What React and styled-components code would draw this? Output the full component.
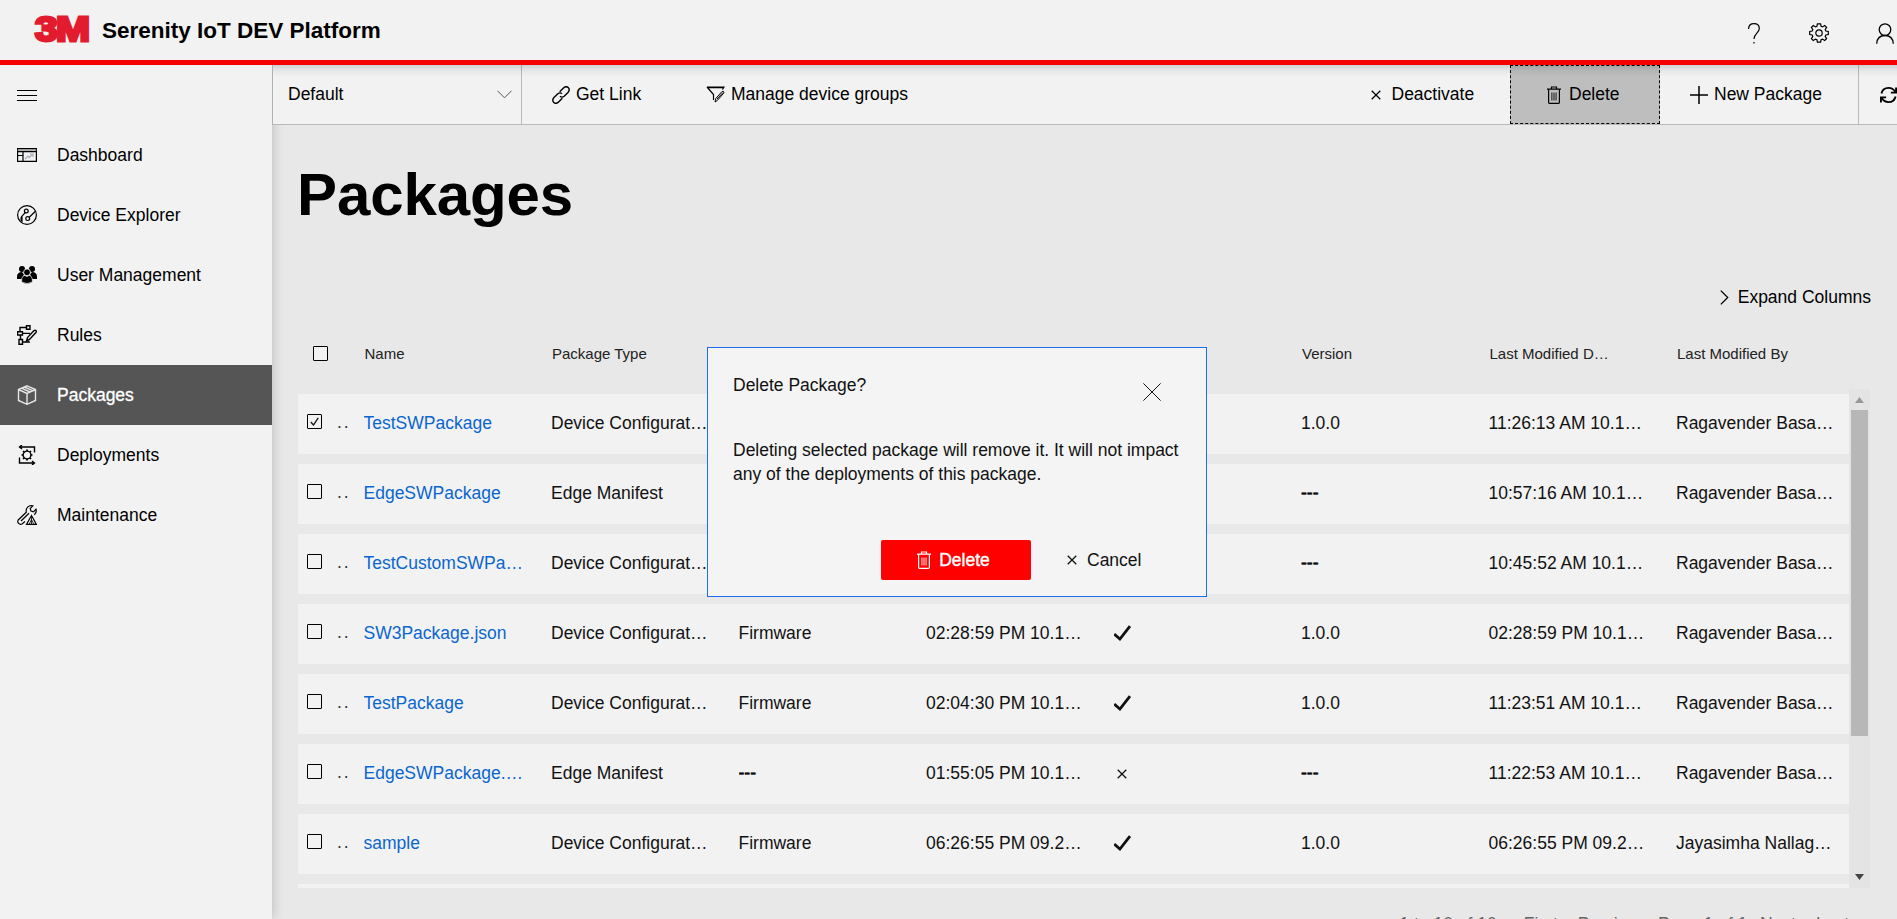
import React from "react";
import styled, { createGlobalStyle, css } from "styled-components";

const Global = createGlobalStyle`
  * { box-sizing: border-box; }
  html, body { margin: 0; padding: 0; overflow: hidden; }
  body { font-family: "Liberation Sans", Arial, sans-serif; font-size: 17.5px; color: #000; background: #e8e8e8; }
`;

const Shell = styled.div`
  width: 1897px;
  height: 919px;
  display: flex;
  flex-direction: column;
  overflow: hidden;
`;

const Header = styled.header`
  flex: none;
  height: 65px;
  display: flex;
  align-items: flex-start;
  background: #f2f2f2;
  border-bottom: 5px solid #f50000;
  padding-left: 35px;
  position: relative;
  z-index: 2;
`;

const Brand = styled.h1`
  margin: 17.5px 0 0 12px;
  font-size: 22.5px;
  line-height: 26px;
  font-weight: 700;
  flex: 1;
`;

const Logo = styled.div`
  margin-top: 14px;
  height: 30px;
  width: 55px;
  font-size: 35.5px;
  line-height: 30px;
  font-weight: 700;
  letter-spacing: -1.5px;
  white-space: nowrap;
  color: #e31b2e;
  -webkit-text-stroke: 3px #e31b2e;
  transform: scaleX(1.15);
  transform-origin: left center;
`;

const HeaderIcons = styled.div`
  display: flex;
  gap: 47px;
  margin: 23px 3px 0 0;
  svg:first-child { margin-right: 2px; }
`;

const Body = styled.div`
  flex: 1;
  display: flex;
  min-height: 0;
`;

const Sidebar = styled.nav`
  flex: none;
  width: 272px;
  background: #f2f2f2;
  box-shadow: 0 0 12px rgba(0, 0, 0, 0.22);
  z-index: 1;
  position: relative;
`;

const NavItem = styled.div`
  height: 60px;
  display: flex;
  align-items: center;
  gap: 20px;
  padding-left: 17px;
  color: ${(p) => (p.$active ? "#fff" : "#000")};
  background: ${(p) => (p.$active ? "#555" : "transparent")};
  ${(p) => p.$active && css`-webkit-text-stroke: 0.3px #fff;`}
`;

const Main = styled.main`
  flex: 1;
  min-width: 0;
  display: flex;
  flex-direction: column;
`;

const Toolbar = styled.div`
  flex: none;
  height: 60px;
  display: flex;
  background: #f2f2f2;
  border-bottom: 1px solid #b9b9b9;
  border-left: 1px solid #b0b0b0;
  position: relative;
  z-index: 1;
  &::after {
    content: "";
    position: absolute;
    inset: 0 0 auto 0;
    height: 12px;
    background: linear-gradient(rgba(0, 0, 0, 0.14), rgba(0, 0, 0, 0.05) 45%, transparent);
  }
`;

const GroupSelect = styled.div`
  width: 249px;
  border-right: 1px solid #b9b9b9;
  display: flex;
  justify-content: space-between;
  padding: 0 9px 0 15px;
  align-items: center;
`;

const Tool = styled.div`
  display: flex;
  align-items: center;
  white-space: nowrap;
  padding: 0 0 0 ${(p) => p.$pad}px;
  gap: ${(p) => p.$gap}px;
  width: ${(p) => p.$w}px;
  ${(p) => p.$focused && css`
    background: #bebebe;
    border: 1px dashed #000;
  `}
  ${(p) => p.$divider && css`
    border-left: 1px solid #b9b9b9;
  `}
`;

const Spacer = styled.div`
  flex: 1;
`;

const Content = styled.div`
  flex: 1;
  min-height: 0;
  padding: 35px 27px 0 26px;
  display: flex;
  flex-direction: column;
`;

const Title = styled.h2`
  flex: none;
  margin: 0 0 0 -1px;
  font-size: 60px;
  line-height: 70px;
  font-weight: 700;
  letter-spacing: -0.1px;
`;

const Expand = styled.div`
  flex: none;
  margin: 57px -1px 0 0;
  height: 20px;
  display: flex;
  justify-content: flex-end;
  align-items: center;
  gap: 9px;
  white-space: nowrap;
`;

const gridColumns = css`
  display: grid;
  grid-template-columns: 65.5px repeat(7, 187.5px) 173px;
  white-space: nowrap;
`;

const HeadRow = styled.div`
  flex: none;
  ${gridColumns}
  height: 82px;
  align-items: center;
  padding-top: 12px;
  font-size: 15px;
  color: #222;
`;

const GridBox = styled.div`
  flex: none;
  height: 499px;
  display: flex;
`;

const Rows = styled.div`
  width: 1551px;
  padding-top: 5px;
  overflow: hidden;
  display: flex;
  flex-direction: column;
  gap: 10px;
`;

const Row = styled.div`
  flex: none;
  ${gridColumns}
  height: 60px;
  align-items: center;
  background: #f2f2f2;
  color: #111;
`;

const Lead = styled.div`
  display: flex;
  align-items: center;
  padding-left: ${(p) => (p.$head ? 15 : 9)}px;
  gap: 15px;
`;

const Check = styled.span`
  flex: none;
  width: 15px;
  height: 15px;
  border: 1px solid #000;
  border-radius: 1px;
  background: #f2f2f2;
  display: flex;
  align-items: center;
  justify-content: center;
  margin-bottom: ${(p) => (p.$head ? 1 : 5)}px;
`;

const Dots = styled.span`
  letter-spacing: 2px;
  margin-bottom: 3px;
  color: #333;
`;

const Cell = styled.div`
  padding-left: ${(p) => p.$icon || 0}px;
  padding-bottom: 2px;
  overflow: hidden;
  color: ${(p) => (p.$link ? "#0a66d0" : "inherit")};
  ${(p) => p.$strong && css`-webkit-text-stroke: 0.6px #000;`}
`;

const ScrollTrack = styled.div`
  width: 21px;
  background: #e4e4e4;
  display: flex;
  flex-direction: column;
  align-items: center;
`;

const Thumb = styled.div`
  width: 17px;
  height: 326px;
  background: #b7b7b7;
`;

const Arrow = styled.div`
  height: ${(p) => p.$h || 21}px;
  width: 9px;
  display: flex;
  align-items: center;
  justify-content: center;
`;

const Pager = styled.div`
  flex: none;
  margin-top: 26px;
  display: flex;
  justify-content: flex-end;
  padding-right: 21px;
  color: #666;
  white-space: nowrap;
`;

const PageBit = styled.span`
  margin-left: ${(p) => p.$m}px;
`;

const Modal = styled.div`
  position: absolute;
  left: 707px;
  top: 347px;
  width: 500px;
  height: 250px;
  z-index: 5;
  background: #f4f4f4;
  border: 1px solid #1b6fee;
  padding: 25px 25px 16px;
  display: flex;
  flex-direction: column;
  color: #111;
`;

const ModalHead = styled.div`
  display: flex;
  justify-content: space-between;
  line-height: 24px;
  padding-right: 20px;
  height: 65px;
  svg { margin-top: 10px; }
`;

const ModalText = styled.p`
  margin: 0;
  line-height: 24px;
  white-space: nowrap;
  flex: 1;
`;

const ModalActions = styled.div`
  display: flex;
  align-items: center;
  padding-left: 148px;
`;

const DangerButton = styled.div`
  width: 150px;
  height: 40px;
  border-radius: 2px;
  background: #f00;
  color: #fff;
  display: flex;
  align-items: center;
  justify-content: center;
  gap: 8px;
  padding-right: 5px;
  -webkit-text-stroke: 0.4px #fff;
`;

const CancelButton = styled.div`
  display: flex;
  align-items: center;
  gap: 10px;
  padding-left: 36px;
`;

const Svg = ({ w = 20, h = w, vb, sw = 1.2, children, ...r }) => (
  <svg width={w} height={h} viewBox={vb || `0 0 ${w} ${h}`} fill="none" stroke="currentColor" strokeWidth={sw} {...r}>
    {children}
  </svg>
);

const Burger = () => <Svg sw={1}><path d="M0 5.500H20M0 10.500H20M0 15.500H20" stroke="#000" /></Svg>;
const DashIcon = () => (
  <Svg sw={1.200}><path d="M.6 3.600H19.400V16.400H.6ZM.6 6.600H19.400M6 6.600V16.400M.6 10.500H6" /><path d="M.6 5H19.400" stroke="#888" /><path d="M8 14l3-3 1.500 1.500 3-3.500M13 9h3v3" stroke="#a9b0b8" /></Svg>
);
const DeviceIcon = () => (
  <Svg><circle cx="10" cy="10" r="9.400" /><circle cx="9.300" cy="6" r="1.900" /><circle cx="10.700" cy="13.600" r="1.900" /><path d="M8.300 7.500L5 11.200V17M12.200 12.300L18.500 6.200M5 11.200C4 12 3.800 13.500 4.300 16" /></Svg>
);
const UsersIcon = () => (
  <Svg stroke="none" fill="currentColor"><circle cx="5" cy="4" r="3" /><circle cx="15" cy="4" r="3" /><path d="M0 14V11.500C0 8.500 2 7 5 7L7 9.500L4.500 14ZM20 14V11.500C20 8.500 18 7 15 7L13 9.500L15.500 14Z" /><circle cx="10" cy="7.300" r="3.400" fill="currentColor" stroke="#f2f2f2" strokeWidth=".8" /><path d="M4.700 17V15C4.700 12 6.500 10.400 8 10.400Q10 12.500 12 10.400C13.500 10.400 15.300 12 15.300 15V17Q10 20 4.700 17Z" stroke="#f2f2f2" strokeWidth=".6" /></Svg>
);
const RulesIcon = () => (
  <Svg sw={1.400}><path d="M9.500 .8H13V4.300H9.500ZM.6 6.800H5.500V10H.6ZM2 14.500H5.500V19.300H2ZM3 6.800V2.500H9.500M5.500 8.400H13M3.500 10V14.500M5.500 17H12L11.500 16" /><path d="M9.500 16L10.500 12.500L17 5.600C18.600 4.500 20 6 18.900 7.500L12.500 14.500Z" /></Svg>
);
const PackageIcon = () => (
  <Svg sw={1.400} stroke="#e6e6e6"><path d="M10 .8L18.500 4.500V15.500L10 19.300L1.500 15.500V4.500ZM1.500 4.500L10 8.400L18.500 4.500M10 8.400V19.300M4.500 3.200L13 7M7.300 2L15.700 5.700" /></Svg>
);
const DeployIcon = () => (
  <Svg sw={1.400}>
    <circle cx="10" cy="10" r="3.900" />
    <path d="M10 4.500V6M10 14V15.500M4.500 10H6M14 10H15.500M6 6L7.200 7.200M12.800 12.800L14 14M14 6L12.800 7.200M7.200 12.800L6 14" strokeWidth="1.700" />
    <path d="M2.500 2H17.500V7.500M5 0L2.500 2L5 4M2.500 12.500V18H17.500M15 16L17.500 18L15 20" />
  </Svg>
);
const MaintIcon = () => (
  <Svg><path d="M8 16.500L5 19C2.500 20.300 -.3 17.500 1.200 15L9.300 7.200C8.500 3 11.500 0 15.800 .9L13.200 3.600L14 6L16.500 6.800L19 4.200C19.700 6.500 18.800 8.500 17.300 9.800" /><path d="M4 16L12 8.300" /><path d="M14.500 10.500L9.500 19.400H19.400Z" /><path d="M14.500 12V19M12.300 19L14.500 14.500L16.700 19" strokeWidth=".8" /></Svg>
);
const ChevronDown = () => <Svg w={15} h={9} sw={1} stroke="#555"><path d="M.5 .8L7.500 7.800L14.500 .8" /></Svg>;
const LinkIcon = () => (
  <Svg w={18} sw={1.400}><path d="M7.700 5.700L11.200 2.200C13 .4 15 .5 16.200 1.600C17.500 3 17.400 4.900 16 6.400L12.200 10.200C10.500 11.600 8.800 11 8 10.300M10.300 12.300L6.800 15.800C5 17.600 3 17.500 1.800 16.400C.5 15 .6 13.100 2 11.600L5.800 7.800C7.500 6.400 9.200 7 10 7.700" /></Svg>
);
const FunnelIcon = () => (
  <Svg w={19} h={17}><path d="M1 1H18L16.500 3.500M1 1L7.500 8.500V14M1.500 1.600H17" /><path d="M9 16L9.800 12.500L16 5.500C17.500 4.800 18.500 6 17.700 7.200L11.500 14.300ZM11 13L17 6.500" strokeWidth="1" /></Svg>
);
const SmallX = ({ size = 10 }) => <Svg w={size} sw={1.300} vb="0 0 10 10"><path d="M.7 .7L9.300 9.300M9.300 .7L.7 9.300" /></Svg>;
const Trash = () => (
  <Svg w={14} h={18}><path d="M0 3.200H14M4.500 3V1H9.500V3M1.600 3.200V16.500Q1.600 17.300 2.400 17.300H11.600Q12.400 17.300 12.400 16.500V3.200" /><path d="M4.900 6.500V14.500M7 6.500V14.500M9.100 6.500V14.500" strokeWidth=".9" /></Svg>
);
const Plus = () => <Svg w={18} sw={1.500}><path d="M9 0V18M0 9H18" /></Svg>;
const Refresh = () => (
  <Svg w={18} sw={2}><path d="M1.500 7.500C2.500 3.500 5.500 1.500 9 1.500C12 1.500 14.500 3 16 5.500M16.500 10.500C15.500 14.500 12.500 16.500 9 16.500C6 16.500 3.500 15 2 12.500" /><path d="M17 1V6.500H11.500M1 17V11.500H6.500" /></Svg>
);
const ChevronRight = () => <Svg w={9} h={15} sw={1.300}><path d="M.8 .6L7.700 7.500L.8 14.400" /></Svg>;
const Help = () => <Svg w={12} h={21}><path d="M.6 6C.6 2.500 3 .7 6 .7C9 .7 11.300 2.500 11.300 5.600C11.300 10 6 10.500 6 16M6 19V20.600" /></Svg>;
const Gear = () => (
  <Svg w={20} vb="0 0 20 20" sw={1.200}><circle cx="10" cy="10" r="3.200" /><path d="M8.400 .8H11.600L12.100 3.300L13.500 3.900L15.700 2.500L17.600 4.400L16.200 6.600L16.800 8L19.300 8.500V11.500L16.800 12L16.200 13.400L17.600 15.600L15.700 17.500L13.500 16.100L12.100 16.700L11.600 19.200H8.400L7.900 16.700L6.500 16.100L4.300 17.500L2.400 15.600L3.800 13.400L3.200 12L.7 11.500V8.500L3.200 8L3.800 6.600L2.400 4.400L4.300 2.500L6.500 3.900L7.900 3.300Z" /></Svg>
);
const Person = () => <Svg w={18} h={21} sw={1.300}><circle cx="9" cy="6.600" r="5.800" /><path d="M.7 20.800C1 15.500 4 12.500 9 12.500C14 12.500 17 15.500 17.300 20.800" /></Svg>;
const BigX = () => <Svg w={18} sw={1}><path d="M.4 .4L17.600 17.600M17.600 .4L.4 17.600" /></Svg>;
const Tick = () => <Svg w={18} h={20} sw={2.800}><path d="M.2 13L5.900 18L16 5.200" /></Svg>;
const BoxTick = () => <Svg w={9} h={9} sw={1.300}><path d="M.8 5L3.500 8L8.200 .8" /></Svg>;

const NAV = [
  ["Dashboard", DashIcon],
  ["Device Explorer", DeviceIcon],
  ["User Management", UsersIcon],
  ["Rules", RulesIcon],
  ["Packages", PackageIcon],
  ["Deployments", DeployIcon],
  ["Maintenance", MaintIcon],
];

const HEADINGS = ["Name", "Package Type", "", "", "", "Version", "Last Modified D…", "Last Modified By"];

const DC = "Device Configurat…";
const RB = "Ragavender Basa…";
const DATA = [
  ["TestSWPackage", DC, "", "", null, "1.0.0", "11:26:13 AM 10.1…", RB],
  ["EdgeSWPackage", "Edge Manifest", "", "", null, "---", "10:57:16 AM 10.1…", RB],
  ["TestCustomSWPa…", DC, "", "", null, "---", "10:45:52 AM 10.1…", RB],
  ["SW3Package.json", DC, "Firmware", "02:28:59 PM 10.1…", true, "1.0.0", "02:28:59 PM 10.1…", RB],
  ["TestPackage", DC, "Firmware", "02:04:30 PM 10.1…", true, "1.0.0", "11:23:51 AM 10.1…", RB],
  ["EdgeSWPackage.…", "Edge Manifest", "---", "01:55:05 PM 10.1…", false, "---", "11:22:53 AM 10.1…", RB],
  ["sample", DC, "Firmware", "06:26:55 PM 09.2…", true, "1.0.0", "06:26:55 PM 09.2…", "Jayasimha Nallag…"],
];

const TextCell = ({ value }) => <Cell $strong={value === "---"}>{value}</Cell>;

const ActiveCell = ({ value }) => (
  <Cell $icon={value === false ? 3 : 0}>
    {value === true && <Tick />}
    {value === false && <SmallX />}
  </Cell>
);

export default function App() {
  return (
    <Shell>
      <Global />
      <Header>
        <Logo>3M</Logo>
        <Brand>Serenity IoT DEV Platform</Brand>
        <HeaderIcons><Help /><Gear /><Person /></HeaderIcons>
      </Header>
      <Body>
        <Sidebar>
          <NavItem><Burger /></NavItem>
          {NAV.map(([label, Icon]) => (
            <NavItem key={label} $active={label === "Packages"}><Icon />{label}</NavItem>
          ))}
        </Sidebar>
        <Main>
          <Toolbar>
            <GroupSelect>Default<ChevronDown /></GroupSelect>
            <Tool $pad={30} $gap={6} $w={155}><LinkIcon />Get Link</Tool>
            <Tool $pad={29} $gap={6}><FunnelIcon />Manage device groups</Tool>
            <Spacer />
            <Tool $pad={20} $gap={10.5} $w={159}><SmallX />Deactivate</Tool>
            <Tool $pad={36} $gap={8} $w={150} $focused><Trash />Delete</Tool>
            <Tool $pad={30} $gap={6} $w={198}><Plus />New Package</Tool>
            <Tool $pad={21} $gap={0} $w={39} $divider><Refresh /></Tool>
          </Toolbar>
          <Content>
            <Title>Packages</Title>
            <Expand><ChevronRight />Expand Columns</Expand>
            <HeadRow>
              <Lead $head><Check $head /></Lead>
              {HEADINGS.map((h, i) => <Cell key={i} $icon={1}>{h}</Cell>)}
            </HeadRow>
            <GridBox>
              <Rows>
                {DATA.map((d, i) => (
                  <Row key={d[0]}>
                    <Lead><Check>{i === 0 && <BoxTick />}</Check><Dots>..</Dots></Lead>
                    <Cell $link>{d[0]}</Cell>
                    <TextCell value={d[1]} />
                    <TextCell value={d[2]} />
                    <TextCell value={d[3]} />
                    <ActiveCell value={d[4]} />
                    <TextCell value={d[5]} />
                    <TextCell value={d[6]} />
                    <TextCell value={d[7]} />
                  </Row>
                ))}
                <Row />
              </Rows>
              <ScrollTrack>
                <Arrow><Svg w={9} h={6} stroke="none" fill="#999"><path d="M0 6L4.500 0L9 6Z" /></Svg></Arrow>
                <Thumb />
                <Spacer />
                <Arrow $h={23}><Svg w={9} h={6} stroke="none" fill="#444"><path d="M0 0L4.500 6L9 0Z" /></Svg></Arrow>
              </ScrollTrack>
            </GridBox>
            <Pager>
              <PageBit>1 to 10 of 10</PageBit>
              <PageBit $m={27}>First</PageBit>
              <PageBit $m={20}>Previous</PageBit>
              <PageBit $m={12}>Page 1 of 1</PageBit>
              <PageBit $m={12.5}>Next</PageBit>
              <PageBit $m={20}>Last</PageBit>
            </Pager>
          </Content>
        </Main>
      </Body>
      <Modal>
        <ModalHead>Delete Package?<BigX /></ModalHead>
        <ModalText>
          Deleting selected package will remove it. It will not impact<br />
          any of the deployments of this package.
        </ModalText>
        <ModalActions>
          <DangerButton><Trash />Delete</DangerButton>
          <CancelButton><SmallX />Cancel</CancelButton>
        </ModalActions>
      </Modal>
    </Shell>
  );
}
